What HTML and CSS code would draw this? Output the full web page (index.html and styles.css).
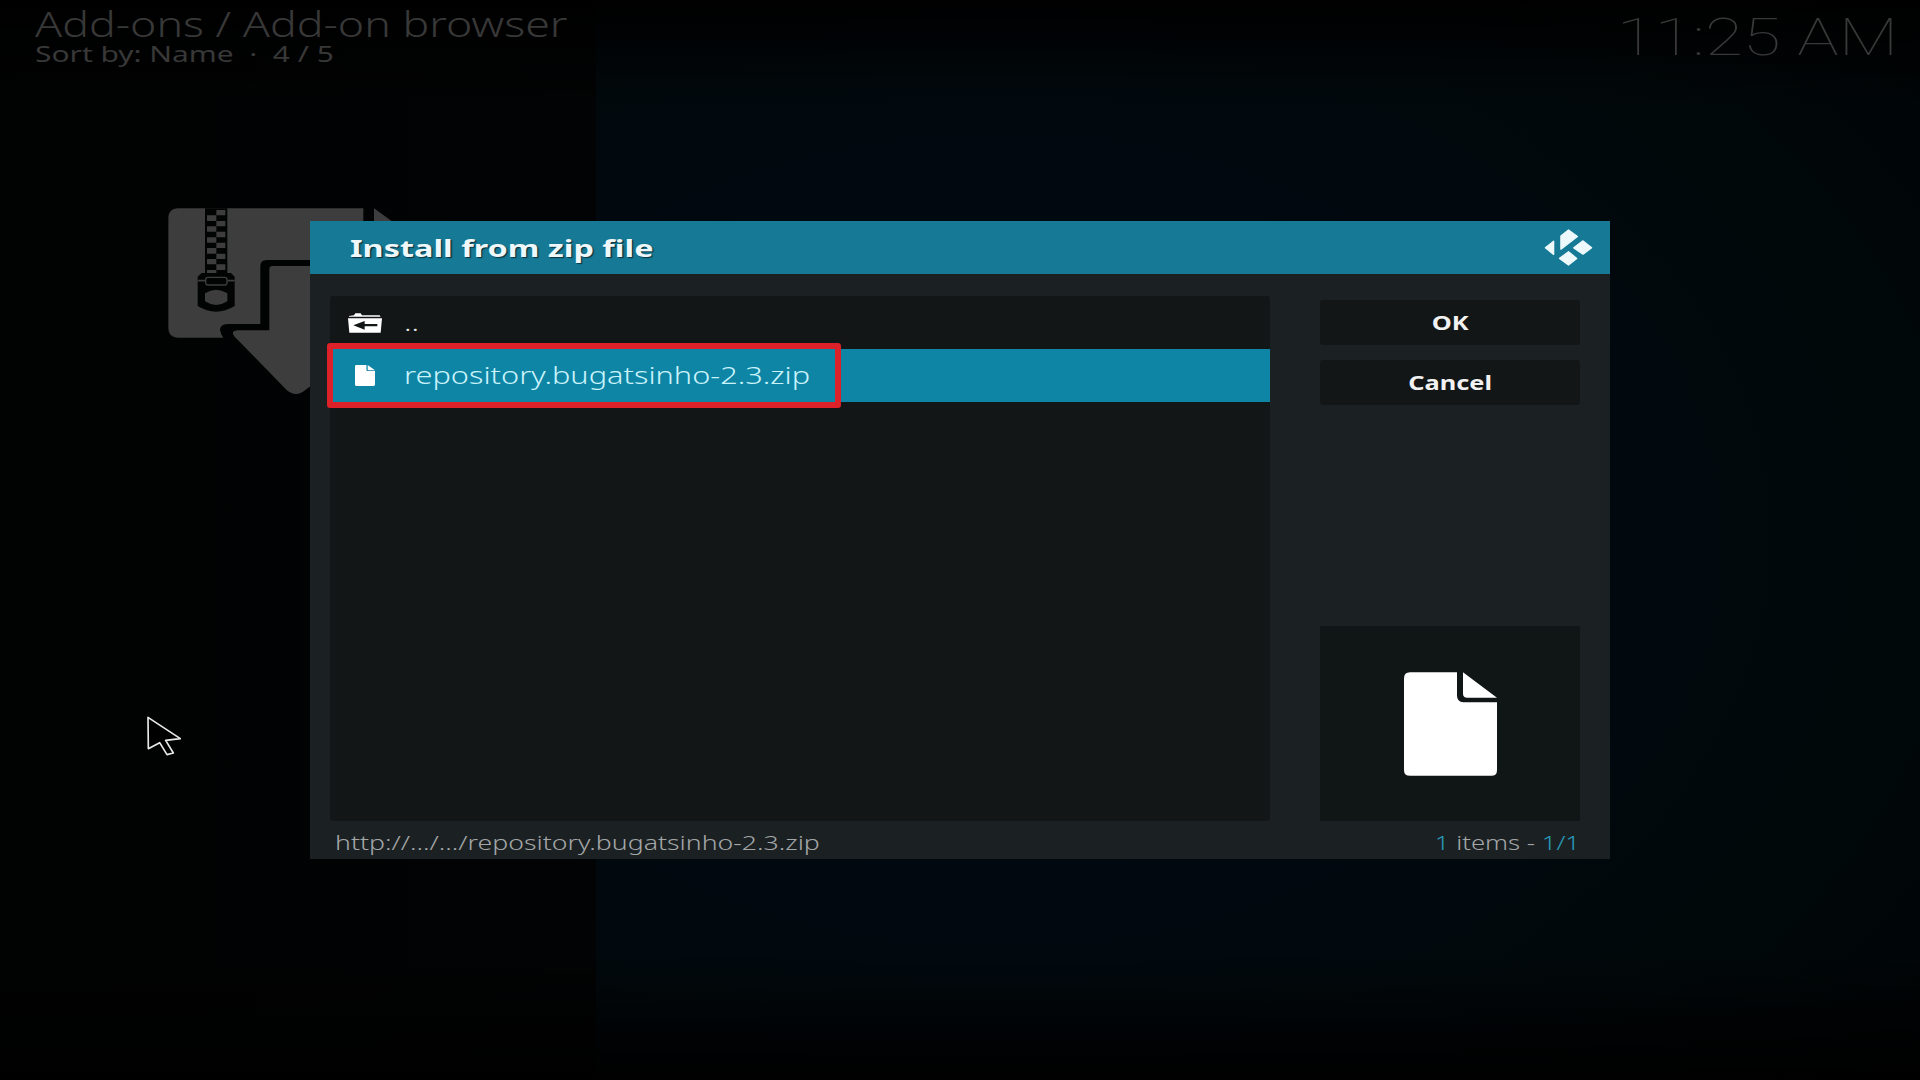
FILE: index.html
```html
<!DOCTYPE html>
<html lang="en">
<head>
<meta charset="utf-8">
<title>Add-on browser</title>
<link rel="stylesheet" href="styles.css">
</head>
<body>
<div class="screen">
  <header class="topbar">
    <div class="heading">
      <div class="heading-title"><span class="wide">Add-ons / Add-on browser</span></div>
      <div class="heading-sort"><span class="wide">Sort by: Name &nbsp;·&nbsp; 4 / 5</span></div>
    </div>
    <div class="clock"><span class="wide">11:25 AM</span></div>
  </header>
  <main class="content">
    <aside class="side">
      <svg class="zip-icon" viewBox="0 0 840 660">
        <path fill="#3d3d3d" d="M82 55H640V210H350Q331 210 331 228V402H232Q210 404 210 420Q212 432 220 443H82Q55 441 55 415V82Q57 57 82 55Z"/>
        <path fill="#3d3d3d" d="M672 55L800 148V200H672Z"/>
        <path fill="#3d3d3d" d="M368 228H520V560L466 600Q438 624 410 600L254 440Q240 424 262 421H358V238Q358 228 368 228Z"/>
        <path fill="#020303" d="M165 55H232V250H165Z"/>
        <path fill="#3d3d3d" d="M199 60h27v16h-27zM171 76h28v17h-28zM199 93h27v16h-27zM171 109h28v16h-28zM199 125h27v17h-27zM171 142h28v16h-28zM199 158h27v16h-27zM171 174h28v17h-28zM199 191h27v16h-27zM171 207h28v16h-28zM199 223h27v17h-27zM171 240h28v9h-28z"/>
        <path fill="#020303" d="M155 249H243L254 260V348Q198 382 143 348V260Z"/>
        <path fill="none" stroke="#3d3d3d" stroke-width="5" d="M143 272H166M232 272H254"/>
        <rect x="167" y="262" width="64" height="23" rx="7" fill="none" stroke="#3d3d3d" stroke-width="4"/>
        <path fill="#3d3d3d" d="M165 310Q198 288 232 310V334Q198 356 165 334Z"/>
      </svg>
    </aside>
    <section class="backdrop"></section>
  </main>

  <section class="dialog">
    <div class="dialog-head">
      <h1 class="dialog-title"><span class="wide">Install from zip file</span></h1>
      <svg class="logo" viewBox="0 0 146 112">
        <g fill="#eef9fc" stroke="#eef9fc" stroke-width="4" stroke-linejoin="round">
          <path d="M3 57L28 37V77Z"/><path d="M50 21L73 3L100 23L50 61Z"/><path d="M89 57L117 36L143 57L117 76Z"/><path d="M46 89L73 69L98 89L73 109Z"/>
        </g>
      </svg>
    </div>
    <div class="dialog-body">
      <ul class="files">
        <li class="file">
          <span class="file-icon"><svg width="34" height="20" viewBox="0 0 102 60"><path fill="#fff" d="M3 9L18 7L22 1H38L42 7H95L98 11H3ZM0 16H102L98 59H4Z"/><path fill="#131617" d="M16 37L50 24V33H88V40H50V50Z"/></svg></span>
          <span class="file-name"><span class="wide">..</span></span>
        </li>
        <li class="file selected">
          <span class="file-icon"><svg width="20" height="21" viewBox="0 0 279 311" preserveAspectRatio="none"><path fill="#fff" d="M18 0H159V70Q159 90 178 90H279V294Q279 311 262 311H18Q0 311 0 294V18Q0 0 18 0ZM177 0L279 77H190Q177 77 177 65Z"/></svg></span>
          <span class="file-name"><span class="wide">repository.bugatsinho-2.3.zip</span></span>
          <span class="marker"></span>
        </li>
      </ul>
      <div class="actions">
        <button class="btn"><span class="wide">OK</span></button>
        <button class="btn"><span class="wide">Cancel</span></button>
        <div class="preview">
          <svg width="93" height="104" viewBox="0 0 279 311"><path fill="#fff" d="M18 0H159V70Q159 90 178 90H279V294Q279 311 262 311H18Q0 311 0 294V18Q0 0 18 0ZM177 0L279 77H190Q177 77 177 65Z"/></svg>
        </div>
      </div>
    </div>
    <footer class="dialog-foot">
      <span class="path"><span class="wide">http://.../.../repository.bugatsinho-2.3.zip</span></span>
      <span class="count"><span class="wide"><b>1</b> items - <b>1/1</b></span></span>
    </footer>
  </section>

  <svg class="cursor" viewBox="0 0 102 118"><path fill="#000" stroke="#e8e8e8" stroke-width="5" stroke-linejoin="round" d="M3 3L100 67L56 72L79 110L60 115L38 79L4 97Z"/></svg>
</div>
</body>
</html>
```
FILE: styles.css
```css
* { box-sizing: border-box; }
body { margin: 0; background: #000; font-family: "Noto Sans", sans-serif; }
.screen { position: relative; width: 1920px; height: 1080px; overflow: hidden; display: flex; flex-direction: column;
  background:
    linear-gradient(#000 0, transparent 110px, transparent 950px, #000 1080px),
    linear-gradient(90deg, #010202 0, #020304 596px, transparent 596px),
    radial-gradient(ellipse 1200px 850px at 1000px 540px, #010b12 0, #01090f 50%, #01080a 75%, #000405 100%); }
.wide { display: inline-block; white-space: nowrap; transform: scaleX(1.333); transform-origin: 0 50%; }

.topbar { display: flex; justify-content: space-between; height: 76px; padding: 0 22px 0 35px; color: #383838; }
.heading { padding-top: 4px; }
.heading-title { font-size: 34px; line-height: 40px; font-weight: 300; }
.heading-title .wide { transform: scaleX(1.314); }
.heading-sort { font-size: 22px; line-height: 19px; }
.heading-sort .wide { transform: scaleX(1.36); }
.clock { font: 100 52px/76px Roboto, sans-serif; }
.clock .wide { transform-origin: 100% 50%; }

.content { flex: 1; display: flex; }
.side { width: 596px; padding: 114px 0 0 150px; }
.zip-icon { display: block; width: 280px; height: 220px; }
.backdrop { flex: 1; }

.dialog { position: absolute; left: 310px; top: 221px; width: 1300px; height: 638px; display: flex; flex-direction: column; background: #1b2123; }
.dialog-head { display: flex; justify-content: space-between; align-items: center; height: 53px; padding: 0 17px 0 40px; background: #167a96; }
.dialog-title { margin: 0; font-size: 24px; line-height: 54px; color: #eef7fa; text-shadow: 1px 1px 1px #0b303c; }
.dialog-title .wide { transform: scaleX(1.35); }
.logo { width: 49px; height: 37px; }
.dialog-body { display: flex; justify-content: space-between; height: 547px; padding: 22px 30px 0 20px; }
.files { list-style: none; width: 940px; height: 525px; margin: 0; padding: 0; border-radius: 3px; background: #131617; }
.file { position: relative; display: flex; height: 53px; font-size: 23px; font-weight: 300; line-height: 52px; color: #e6e6e6; }
.selected { background: #0f85a5; color: #c9f3fb; }
.file-icon { display: flex; align-items: center; justify-content: center; width: 70px; }
.file-name { padding-left: 4px; }
.file-name .wide { transform: scaleX(1.336); }
.marker { position: absolute; left: -3px; top: -6px; width: 514px; height: 65px; border: 6px solid #dc2228; border-radius: 3px; }
.actions { display: flex; flex-direction: column; gap: 15px; width: 260px; padding-top: 4px; }
.btn { height: 45px; padding: 0; border: 0; border-radius: 3px; background: #131617; color: #f2f2f2; font: 700 19.5px/44px "Noto Sans", sans-serif; }
.btn .wide { transform: scaleX(1.3); transform-origin: 50% 50%; }
.preview { display: flex; align-items: center; justify-content: center; height: 195px; margin-top: auto; background: #101515; }
.dialog-foot { display: flex; justify-content: space-between; height: 38px; padding: 0 30px 0 25px; font-size: 20px; font-weight: 300; line-height: 43px; color: #a4a7a8; }
.count .wide { transform: scaleX(1.285); transform-origin: 100% 50%; }
.count b { font-weight: 300; color: #2899b7; }
.cursor { position: absolute; left: 147px; top: 716px; width: 34px; height: 40px; }
```
